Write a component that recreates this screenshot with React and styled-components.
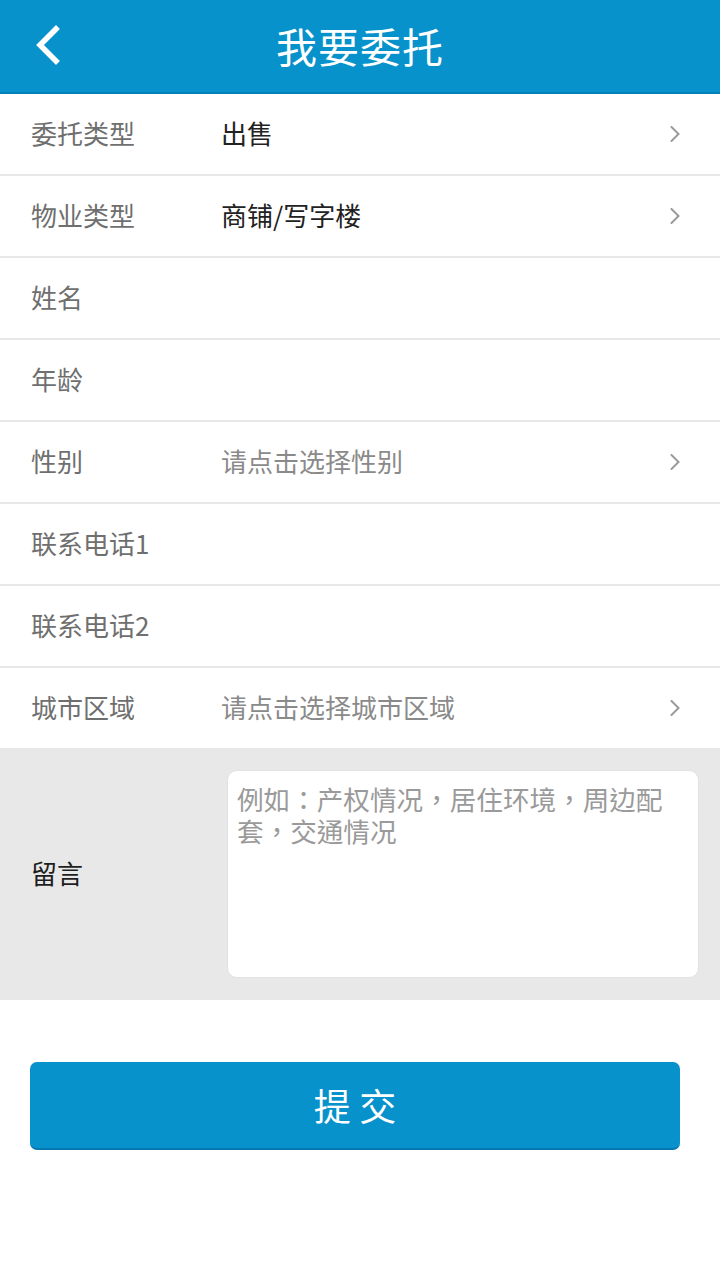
import React from 'react';
import styled, { createGlobalStyle } from 'styled-components';

const GlobalStyle = createGlobalStyle`
  html, body {
    margin: 0;
    padding: 0;
    background: #fff;
  }
  body {
    font-family: "Noto Sans CJK SC", "Noto Sans", sans-serif;
  }
  * { box-sizing: border-box; }
`;

const fields = [
  { label: '委托类型', value: '出售', arrow: true },
  { label: '物业类型', value: '商铺/写字楼', arrow: true },
  { label: '姓名' },
  { label: '年龄' },
  { label: '性别', placeholder: '请点击选择性别', arrow: true },
  { label: '联系电话1' },
  { label: '联系电话2' },
  { label: '城市区域', placeholder: '请点击选择城市区域', arrow: true },
];

const Chevron = ({ color = '#9a9a9a', width = 10, height = 16, stroke = 2 }) => (
  <svg width={width} height={height} viewBox={`0 0 ${width} ${height}`} fill="none">
    <polyline
      points={`${stroke / 2 + 0.5},${stroke / 2} ${width - stroke / 2 - 0.5},${height / 2} ${stroke / 2 + 0.5},${height - stroke / 2}`}
      stroke={color}
      strokeWidth={stroke}
      strokeLinecap="round"
      strokeLinejoin="miter"
    />
  </svg>
);

const BackArrow = () => (
  <svg width="28" height="40" viewBox="0 0 28 40" fill="none">
    <polyline points="22,4 6,20 22,36" stroke="#fff" strokeWidth="5.5" strokeLinecap="square" />
  </svg>
);

const App = () => {
  return (
    <>
      <GlobalStyle />
      <Page>
        <Header>
          <BackButton>
            <BackArrow />
          </BackButton>
          <Title>我要委托</Title>
        </Header>

        <FormList>
          {fields.map((f) => (
            <Row key={f.label}>
              <Label>{f.label}</Label>
              <Value $muted={!f.value}>{f.value || f.placeholder || ''}</Value>
              {f.arrow && (
                <Arrow>
                  <Chevron />
                </Arrow>
              )}
            </Row>
          ))}
        </FormList>

        <MessageSection>
          <MessageLabel>留言</MessageLabel>
          <MessageBox placeholder="例如：产权情况，居住环境，周边配套，交通情况" />
        </MessageSection>

        <ButtonWrap>
          <SubmitButton>提 交</SubmitButton>
        </ButtonWrap>
      </Page>
    </>
  );
};

const Page = styled.div`
  width: 720px;
  min-height: 1280px;
  background: #fff;
`;

const Header = styled.header`
  height: 94px;
  background: #0792cb;
  border-bottom: 2px solid #0680b8;
  display: flex;
  align-items: center;
  justify-content: center;
  position: relative;
`;

const BackButton = styled.div`
  position: absolute;
  left: 34px;
  top: 25px;
  width: 28px;
  height: 40px;
  display: flex;
`;

const Title = styled.h1`
  margin: 0 0 2px;
  color: #fff;
  font-size: 41px;
  font-weight: 400;
  line-height: 1;
  letter-spacing: 1px;
`;

const FormList = styled.div`
  display: flex;
  flex-direction: column;
`;

const Row = styled.div`
  height: 82px;
  display: flex;
  align-items: center;
  padding: 0 40px 3px 31px;
  border-bottom: 2px solid #e8e8e8;

  &:last-child {
    height: 80px;
    border-bottom: none;
  }
`;

const Label = styled.span`
  width: 190px;
  flex-shrink: 0;
  font-size: 26px;
  color: #6f6f6f;
  line-height: 1;
`;

const Value = styled.span`
  flex: 1;
  font-size: 26px;
  line-height: 1;
  color: ${(p) => (p.$muted ? '#8a8a8a' : '#222')};
`;

const Arrow = styled.span`
  display: flex;
  align-items: center;
  margin-top: 2px;
`;

const MessageSection = styled.section`
  height: 252px;
  background: #e8e8e8;
  display: flex;
  align-items: center;
  padding: 0 21px 0 31px;
`;

const MessageLabel = styled.span`
  width: 196px;
  flex-shrink: 0;
  font-size: 26px;
  color: #1e1e1e;
  line-height: 1;
  margin-bottom: 2px;
`;

const MessageBox = styled.textarea`
  width: 472px;
  height: 208px;
  resize: none;
  border: 1px solid #e2e2e2;
  border-radius: 10px;
  background: #fff;
  padding: 12px 20px 10px 9px;
  font-family: "Noto Sans CJK TC", "Noto Sans CJK SC", sans-serif;
  font-size: 26.6px;
  line-height: 32px;
  color: #222;
  outline: none;

  &::placeholder {
    color: #9a9a9a;
  }
`;

const ButtonWrap = styled.div`
  padding: 62px 40px 0 30px;
`;

const SubmitButton = styled.button`
  width: 650px;
  height: 88px;
  border: none;
  border-bottom: 2px solid #0679b2;
  border-radius: 7px;
  background: #0792cb;
  color: #fff;
  font-family: "Noto Sans CJK SC", "Noto Sans", sans-serif;
  font-size: 37px;
  line-height: 1;
  display: flex;
  align-items: center;
  justify-content: center;
  white-space: pre;
  cursor: pointer;
`;

export default App;
